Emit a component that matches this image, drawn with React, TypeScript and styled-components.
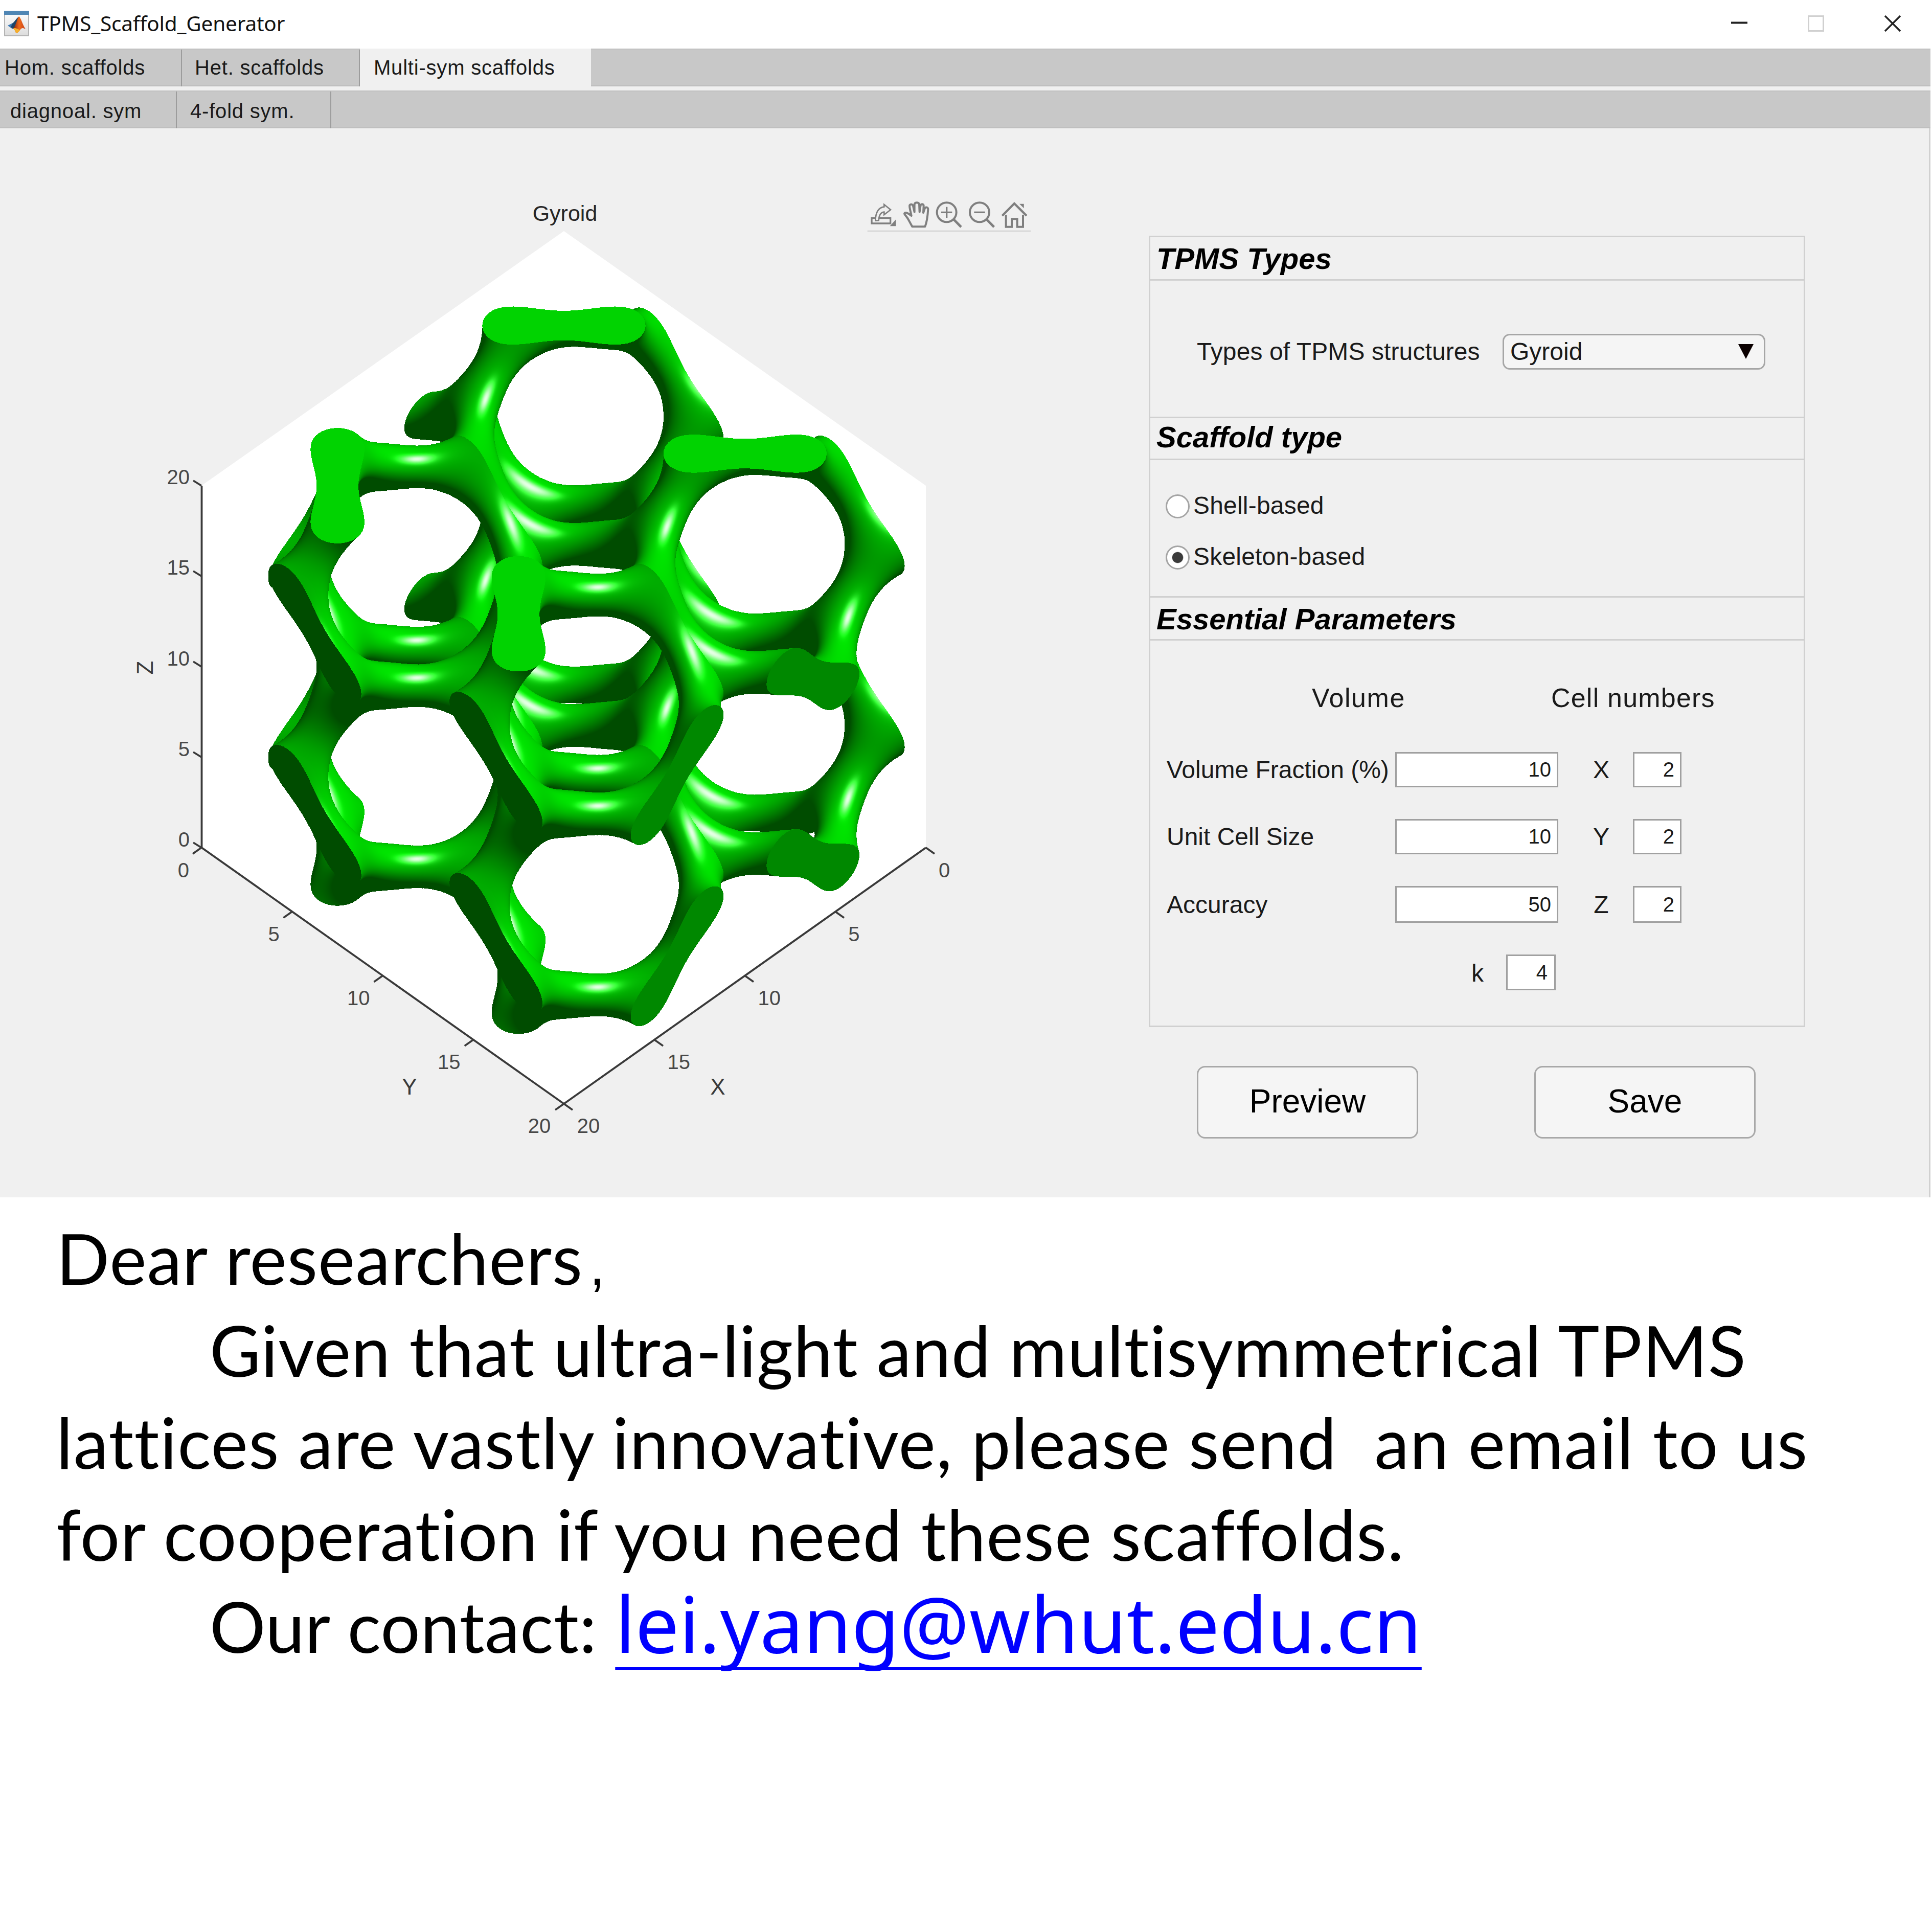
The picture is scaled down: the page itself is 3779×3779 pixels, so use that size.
import React, { useLayoutEffect, useRef } from "react";
import styled, { createGlobalStyle } from "styled-components";

const sans = `"Liberation Sans", Arial, sans-serif`;

const GlobalStyle = createGlobalStyle`
  html, body { margin: 0; padding: 0; background: #fff; }
  *, *::before, *::after { box-sizing: border-box; }
`;

const Page = styled.div`
  width: 3779px;
  height: 3779px;
  background: #fff;
  overflow: hidden;
  display: flex;
  flex-direction: column;
`;

/* ---------- window chrome ---------- */

const Window = styled.section`
  width: 3776px;
  height: 2342px;
  display: flex;
  flex-direction: column;
  background: #f0f0f0;
  font-family: ${sans};
  color: #1a1a1a;
`;

const TitleBar = styled.header`
  height: 95px;
  flex: none;
  display: flex;
  align-items: center;
  background: #fff;
  padding: 0 58px 3px 8px;
`;

const TitleText = styled.h1`
  margin: 0 auto 0 16px;
  font: 400 40.5px/60px "Noto Sans", "Open Sans", sans-serif;
  letter-spacing: -0.2px;
  color: #111;
`;

const WindowButtons = styled.div`
  display: flex;
  gap: 118px;
`;

const TabStrip = styled.nav`
  height: 74px;
  flex: none;
  display: flex;
  background: #c8c8c8;
  border-top: 2px solid #c0c0c0;
  border-bottom: 3px solid #bfbfbf;
  & + & { margin-top: 8px; }
`;

const Tab = styled.div<{ $w: number; $pad: number; $active?: boolean; $drop?: number }>`
  width: ${(p) => p.$w}px;
  height: ${(p) => (p.$active ? 82 : 72)}px;
  margin-top: ${(p) => (p.$active ? -2 : 0)}px;
  padding: ${(p) => (p.$active ? 2 : 0) + (p.$drop ?? 0)}px 0 0 ${(p) => p.$pad}px;
  font-size: 40px;
  line-height: 71px;
  letter-spacing: 0.8px;
  white-space: nowrap;
  background: ${(p) => (p.$active ? "#f0f0f0" : "transparent")};
  border-right: ${(p) => (p.$active ? "none" : "2px solid #9c9c9c")};
`;

const Workspace = styled.main`
  height: 2091px;
  display: flex;
  border-right: 3px solid #d0d0d0;
`;

/* ---------- plot ---------- */

const PlotArea = styled.div`
  position: relative;
  width: 2247px;
  height: 2091px;
  flex: none;
`;

const AxesSvg = styled.svg`
  display: block;
  font-family: ${sans};
`;

const Surface = styled.canvas`
  position: absolute;
  left: 520px;
  top: 339px;
`;

const PlotTools = styled.div`
  position: absolute;
  left: 1680px;
  top: 119px;
`;

/* ---------- parameter panel ---------- */

const Side = styled.aside`
  width: 1284px;
  padding-top: 210px;
`;

const Panel = styled.div`
  border: 3px solid #d0d0d0;
`;

const PanelTitle = styled.h2<{ $h: number; $top?: number; $line?: boolean; $lh?: number }>`
  margin: 0;
  height: ${(p) => p.$h}px;
  padding: ${(p) => p.$top ?? 0}px 0 0 12px;
  border-bottom: 3px solid #d0d0d0;
  border-top: ${(p) => (p.$line ? "3px solid #d0d0d0" : "none")};
  font: italic 700 58px/${(p) => p.$lh ?? 78}px ${sans};
  color: #000;
`;

const TypeRow = styled.div`
  height: 266px;
  padding: 12px 0 0 91px;
  display: flex;
  align-items: center;
  font-size: 48px;
`;

const TypeLabel = styled.label`
  width: 598px;
  padding-bottom: 2px;
  letter-spacing: 0.1px;
`;

const Select = styled.div`
  width: 514px;
  height: 70px;
  padding: 0 20px 1px 12px;
  display: flex;
  align-items: center;
  justify-content: space-between;
  border: 3px solid #a6a6a6;
  border-radius: 14px;
  background: #f5f5f5;
`;

const RadioGroup = styled.div`
  height: 266px;
  padding: 60px 0 0 30px;
  display: flex;
  flex-direction: column;
  gap: 40px;
`;

const RadioRow = styled.label`
  height: 60px;
  display: flex;
  align-items: center;
  gap: 7px;
  font-size: 48px;
  letter-spacing: 0.2px;
  & > span:last-child { padding-bottom: 3px; }
`;

const Dot = styled.span<{ $on?: boolean }>`
  width: 47px;
  height: 47px;
  border-radius: 50%;
  border: 3px solid #a4a4a4;
  background: ${(p) => (p.$on ? "radial-gradient(circle, #3c3c3c 0 10px, #fff 11.5px)" : "#fff")};
`;

const ParamGrid = styled.div`
  height: 753px;
  padding: 68px 0 0 32px;
  display: grid;
  grid-template-columns: 447px 319px 146px 95px;
  grid-template-rows: 88px 69px 69px 72px 70px;
  row-gap: 62px;
  align-content: start;
  align-items: center;
  font-size: 48px;
`;

const ParamHead = styled.div`
  grid-column: 1 / -1;
  display: flex;
  padding-left: 284px;
  font-size: 52px;
  letter-spacing: 1.2px;
  white-space: nowrap;
`;

const VolumeHead = styled.span`
  flex: none;
  width: 468px;
  letter-spacing: 1.6px;
`;

const ParamLabel = styled.label`
  white-space: nowrap;
`;

const AxisLabel = styled.label`
  text-align: center;
  padding-left: 22px;
`;

const KRow = styled.div`
  grid-column: 1 / -1;
  height: 100%;
  display: flex;
  align-items: center;
  padding-left: 596px;
`;

const KLabel = styled.label`
  width: 68px;
  padding-top: 2px;
`;

const NumberBox = styled.div<{ $w: number; $right?: number }>`
  width: ${(p) => p.$w}px;
  height: 100%;
  display: flex;
  align-items: center;
  justify-content: flex-end;
  padding-right: ${(p) => p.$right ?? 11}px;
  border: 3px solid #a0a0a0;
  background: #fff;
  font-size: 40px;
`;

const Actions = styled.div`
  padding: 76px 97px 0 94px;
  display: flex;
  justify-content: space-between;
`;

const Button = styled.button`
  width: 433px;
  height: 142px;
  padding: 0 0 4px;
  border: 3px solid #a8a8a8;
  border-radius: 16px;
  background: #f5f5f5;
  font: 400 64px/1 ${sans};
  color: #000;
`;

/* ---------- letter ---------- */

const Letter = styled.article`
  padding: 28px 0 0 110px;
  font: 400 137px/180px Lato, sans-serif;
  color: #000;
`;

const Line = styled.div<{ $indent?: boolean; $ls: number }>`
  height: 180px;
  padding-left: ${(p) => (p.$indent ? 300 : 0)}px;
  letter-spacing: ${(p) => p.$ls}px;
  white-space: pre;
`;

const Comma = styled.span`
  font: 400 110px/1 "Liberation Sans", sans-serif;
  margin-left: 13px;
`;

const Mail = styled.a`
  font-family: "Noto Sans", "Open Sans", sans-serif;
  font-size: 152px;
  line-height: 0;
  letter-spacing: 0.1px;
  color: #0000ff;
  text-decoration: underline;
  text-decoration-thickness: 6px;
  text-underline-offset: 28px;
  text-decoration-skip-ink: none;
`;

/* ---------- gyroid lattice renderer ---------- */

const CANVAS = { x: 520, y: 590, w: 1260, h: 1440 };
const SIZE = 20;
const TABLE = 8000;
const LEVEL = 1.196;

// Phase tables along each axis; the x phase folds back at mid-length, which mirrors the second cell.
function buildTables() {
  const make = (phase: (v: number) => number) => {
    const s = new Float64Array(TABLE + 2);
    const c = new Float64Array(TABLE + 2);
    for (let i = 0; i < TABLE + 2; i++) {
      const a = (phase((i / TABLE) * SIZE) * Math.PI) / 180;
      s[i] = Math.sin(a);
      c[i] = Math.cos(a);
    }
    return [s, c];
  };
  return {
    x: make((v) => (v > 10 ? 20 - v : v) * 36 - 135),
    y: make((v) => v * 36 - 45),
    z: make((v) => v * 36 + 45),
  };
}

function renderLattice(ctx: CanvasRenderingContext2D) {
  const t = buildTables();
  const [sx, cx] = t.x;
  const [sy, cy] = t.y;
  const [sz, cz] = t.z;
  const k = TABLE / SIZE;
  const idx = (v: number) => {
    const i = (v * k + 0.5) | 0;
    return i < 0 ? 0 : i > TABLE ? TABLE : i;
  };
  const field = (x: number, y: number, z: number) => {
    const i = idx(x), j = idx(y), l = idx(z);
    return sx[i] * cy[j] + sy[j] * cz[l] + sz[l] * cx[i];
  };

  const V = [0.5, 0.5, Math.SQRT1_2];
  const ll = Math.hypot(-0.293, 0.39, 0.873);
  const L = [-0.293 / ll, 0.39 / ll, 0.873 / ll];
  const image = ctx.createImageData(CANVAS.w, CANVAS.h);
  const out = image.data;

  const shade = (o: number, nx: number, ny: number, nz: number) => {
    const nl = nx * L[0] + ny * L[1] + nz * L[2];
    let diff = 0, spec = 0;
    if (nl > 0) {
      diff = 0.6 * nl;
      const nv = nx * V[0] + ny * V[1] + nz * V[2];
      const lv = L[0] * V[0] + L[1] * V[1] + L[2] * V[2];
      const rv = 2 * nl * nv - lv;
      if (rv > 0) spec = 0.9 * Math.pow(rv, 10);
    }
    out[o] = spec * 255;
    out[o + 1] = Math.min(255, (0.3 + diff + spec) * 255);
    out[o + 2] = spec * 255;
    out[o + 3] = 255;
  };

  const STEP = 0.2;
  for (let row = 0; row < CANVAS.h; row++) {
    const py = row + CANVAS.y + 0.5;
    const m = 40 - (2160 - 354.4 - py) / 25.06;
    for (let col = 0; col < CANVAS.w; col++) {
      const px = col + CANVAS.x + 0.5;
      const a = (px - 1103) / 35.43;
      const x0 = (m - a) / 2, y0 = (m + a) / 2, z0 = 10;
      const tx = (x0 - SIZE) / V[0], ty = (y0 - SIZE) / V[1], tz = (z0 - SIZE) / V[2];
      const enter = Math.max(tx, ty, tz);
      const exit = Math.min(x0 / V[0], y0 / V[1], z0 / V[2]);
      if (enter >= exit) continue;
      const o = (row * CANVAS.w + col) * 4;
      const at = (d: number) => field(x0 - V[0] * d, y0 - V[1] * d, z0 - V[2] * d);
      if (at(enter) > LEVEL) {
        if (enter === tz) shade(o, 0, 0, 1);
        else if (enter === tx) shade(o, 1, 0, 0);
        else shade(o, 0, 1, 0);
        continue;
      }
      let d = enter, hit = false;
      while (d < exit) {
        d += STEP;
        if (d > exit) d = exit;
        if (at(d) > LEVEL) { hit = true; break; }
      }
      if (!hit) continue;
      let lo = d - STEP, hi = d;
      for (let n = 0; n < 7; n++) {
        const mid = (lo + hi) / 2;
        if (at(mid) > LEVEL) hi = mid; else lo = mid;
      }
      const x = x0 - V[0] * hi, y = y0 - V[1] * hi, z = z0 - V[2] * hi;
      const i = idx(x), j = idx(y), l = idx(z);
      let gx = -(cx[i] * cy[j] - sz[l] * sx[i]);
      const gy = -(cy[j] * cz[l] - sx[i] * sy[j]);
      const gz = -(cz[l] * cx[i] - sy[j] * sz[l]);
      if (x > 10) gx = -gx;
      const g = Math.hypot(gx, gy, gz) || 1;
      shade(o, gx / g, gy / g, gz / g);
    }
  }
  ctx.putImageData(image, 0, 0);
}

function Lattice() {
  const ref = useRef<HTMLCanvasElement>(null);
  useLayoutEffect(() => {
    const ctx = ref.current?.getContext("2d");
    if (ctx) renderLattice(ctx);
  }, []);
  return <Surface ref={ref} width={CANVAS.w} height={CANVAS.h} />;
}

/* ---------- axes ---------- */

const steps = [0, 5, 10, 15, 20];

function Axes() {
  return (
    <AxesSvg width="2247" height="2091" viewBox="0 251 2247 2091">
      <polygon points="1103,452 1811,950 1811,1658 1103,2160 394,1658 394,950" fill="#fff" />
      <g stroke="#3a3a3a" strokeWidth="3.8" fill="none">
        <path d="M394.5 950V1658L1103 2159L1811 1658" />
        {steps.map((v) => {
          const f = v / 20;
          return (
            <path
              key={v}
              d={`M394 ${1658 - 708 * f}l-16 -10M${394 + 709 * f} ${1658 + 501 * f}l-17 12M${1811 - 708 * f} ${1658 + 501 * f}l17 12`}
            />
          );
        })}
      </g>
      <g fontSize="40" fill="#484848">
        {steps.map((v) => {
          const f = v / 20;
          return (
            <React.Fragment key={v}>
              <text x="371" y={1656 - 709 * f} textAnchor="end">{v}</text>
              <text x={370 + 176.8 * (v / 5)} y={1716 + 500 * f} textAnchor="end">{v}</text>
              <text x={1836 - 176.8 * (v / 5)} y={1716 + 500 * f}>{v}</text>
            </React.Fragment>
          );
        })}
      </g>
      <g fontSize="44" fill="#3a3a3a">
        <text x="801" y="2141" textAnchor="middle">Y</text>
        <text x="1404" y="2141" textAnchor="middle">X</text>
        <text transform="translate(299 1306) rotate(-90)" textAnchor="middle">Z</text>
        <text x="1105" y="432" textAnchor="middle" fontSize="43" fill="#262626">Gyroid</text>
      </g>
    </AxesSvg>
  );
}

function ToolIcons() {
  return (
    <svg width="360" height="100" viewBox="0 0 1080 300" fill="none" stroke="#7f7f7f" strokeWidth="12">
      <path d="M50 246H1008" stroke="#d4d4d4" strokeWidth="8" />
      <path d="M97 170H75V201H185V170H120" strokeWidth="10" />
      <path d="M97 185C98 140 112 108 148 104V90L186 121L148 150V134C128 136 118 152 116 184Z" strokeWidth="8" />
      <path d="M217 178V217H182Z" fill="#7f7f7f" stroke="none" />
      <path d="M313 220L290 178C282 160 268 152 267 144C270 134 284 136 308 156C304 130 294 104 298 94C304 86 314 88 318 98L326 134L326 88C330 76 350 76 354 88L356 134L362 94C368 84 380 88 380 98L378 138L386 114C392 102 406 106 406 118C404 150 398 196 388 220Z" strokeLinejoin="round" />
      <circle cx="515" cy="136" r="57" />
      <path d="M483 136H547M515 104V168" strokeWidth="10" />
      <path d="M557 178L600 222" strokeWidth="14" />
      <circle cx="708" cy="136" r="57" />
      <path d="M676 136H740" strokeWidth="10" />
      <path d="M750 178L793 222" strokeWidth="14" />
      <path d="M841 156L912 84L984 156" strokeWidth="13" />
      <path d="M863 150V221H897V175H929V221H963V150" />
      <path d="M942 86H968V112Z" fill="#7f7f7f" stroke="none" />
    </svg>
  );
}

function AppIcon() {
  return (
    <svg width="49" height="50" viewBox="0 0 49 50">
      <defs>
        <linearGradient id="paper" x1="0" y1="0" x2="0" y2="1">
          <stop offset="0" stopColor="#ffffff" />
          <stop offset="1" stopColor="#dcdcdc" />
        </linearGradient>
        <linearGradient id="peak" x1="0" y1="0" x2="1" y2="0">
          <stop offset="0" stopColor="#7a1a10" />
          <stop offset="0.5" stopColor="#ef6a1a" />
          <stop offset="1" stopColor="#c8401a" />
        </linearGradient>
      </defs>
      <rect x="1" y="1" width="47" height="48" fill="url(#paper)" stroke="#b4b4b4" strokeWidth="2" />
      <rect x="0" y="0" width="49" height="8" fill="#4f86b4" />
      <path d="M7 29L17 24C21 22 24 14 29 12L22 34L17 36Z" fill="#3a78b4" />
      <path d="M17 24C21 22 24 14 29 12L24 32L18 35L13 32Z" fill="#1d4468" />
      <path d="M29 11C33 14 36 27 42 36C37 33 34 33 31 38C28 42 26 44 23 43C22 39 20 36 17 35C23 31 25 16 29 11Z" fill="url(#peak)" />
      <path d="M23 43C22 39 20 36 17 35C21 33 24 34 31 38C28 42 26 44 23 43Z" fill="#f6b02c" />
    </svg>
  );
}

const params = [
  { label: "Volume Fraction (%)", value: 10, axis: "X", cells: 2 },
  { label: "Unit Cell Size", value: 10, axis: "Y", cells: 2 },
  { label: "Accuracy", value: 50, axis: "Z", cells: 2 },
];

export default function App() {
  return (
    <Page>
      <GlobalStyle />
      <Window>
        <TitleBar>
          <AppIcon />
          <TitleText>TPMS_Scaffold_Generator</TitleText>
          <WindowButtons>
            <svg width="32" height="32" viewBox="0 0 32 32"><path d="M0 14.5H32" stroke="#222" strokeWidth="4" /></svg>
            <svg width="32" height="32" viewBox="0 0 32 32"><rect x="1.5" y="1.5" width="29" height="29" fill="none" stroke="#d0d0d0" strokeWidth="3" /></svg>
            <svg width="32" height="32" viewBox="0 0 32 32"><path d="M1 1L31 31M31 1L1 31" stroke="#222" strokeWidth="3.4" /></svg>
          </WindowButtons>
        </TitleBar>
        <TabStrip>
          <Tab $w={356} $pad={9}>Hom. scaffolds</Tab>
          <Tab $w={348} $pad={25}>Het. scaffolds</Tab>
          <Tab $w={452} $pad={27} $active>Multi-sym scaffolds</Tab>
        </TabStrip>
        <TabStrip>
          <Tab $w={346} $pad={20} $drop={3}>diagnoal. sym</Tab>
          <Tab $w={302} $pad={26} $drop={3}>4-fold sym.</Tab>
        </TabStrip>
        <Workspace>
          <PlotArea>
            <Axes />
            <Lattice />
            <PlotTools><ToolIcons /></PlotTools>
          </PlotArea>
          <Side>
            <Panel>
              <PanelTitle $h={85} $top={3}>TPMS Types</PanelTitle>
              <TypeRow>
                <TypeLabel>Types of TPMS structures</TypeLabel>
                <Select>
                  Gyroid
                  <svg width="30" height="29" viewBox="0 0 30 29"><path d="M0 0H30L15 29Z" fill="#0a0000" /></svg>
                </Select>
              </TypeRow>
              <PanelTitle $h={85} $lh={74} $line>Scaffold type</PanelTitle>
              <RadioGroup>
                <RadioRow><Dot /><span>Shell-based</span></RadioRow>
                <RadioRow><Dot $on /><span>Skeleton-based</span></RadioRow>
              </RadioGroup>
              <PanelTitle $h={87} $top={3} $line>Essential Parameters</PanelTitle>
              <ParamGrid>
                <ParamHead><VolumeHead>Volume</VolumeHead><span>Cell numbers</span></ParamHead>
                {params.map((p) => (
                  <React.Fragment key={p.axis}>
                    <ParamLabel>{p.label}</ParamLabel>
                    <NumberBox $w={319}>{p.value}</NumberBox>
                    <AxisLabel>{p.axis}</AxisLabel>
                    <NumberBox $w={95}>{p.cells}</NumberBox>
                  </React.Fragment>
                ))}
                <KRow>
                  <KLabel>k</KLabel>
                  <NumberBox $w={97} $right={13}>4</NumberBox>
                </KRow>
              </ParamGrid>
            </Panel>
            <Actions>
              <Button>Preview</Button>
              <Button>Save</Button>
            </Actions>
          </Side>
        </Workspace>
      </Window>
      <Letter>
        <Line $ls={0.95}>Dear researchers<Comma>,</Comma></Line>
        <Line $indent $ls={0.9}>Given that ultra-light and multisymmetrical TPMS</Line>
        <Line $ls={1.3}>lattices are vastly innovative, please send  an email to us</Line>
        <Line $ls={1.05}>for cooperation if you need these scaffolds.</Line>
        <Line $indent $ls={0.6}>Our contact: <Mail>lei.yang@whut.edu.cn</Mail></Line>
      </Letter>
    </Page>
  );
}
